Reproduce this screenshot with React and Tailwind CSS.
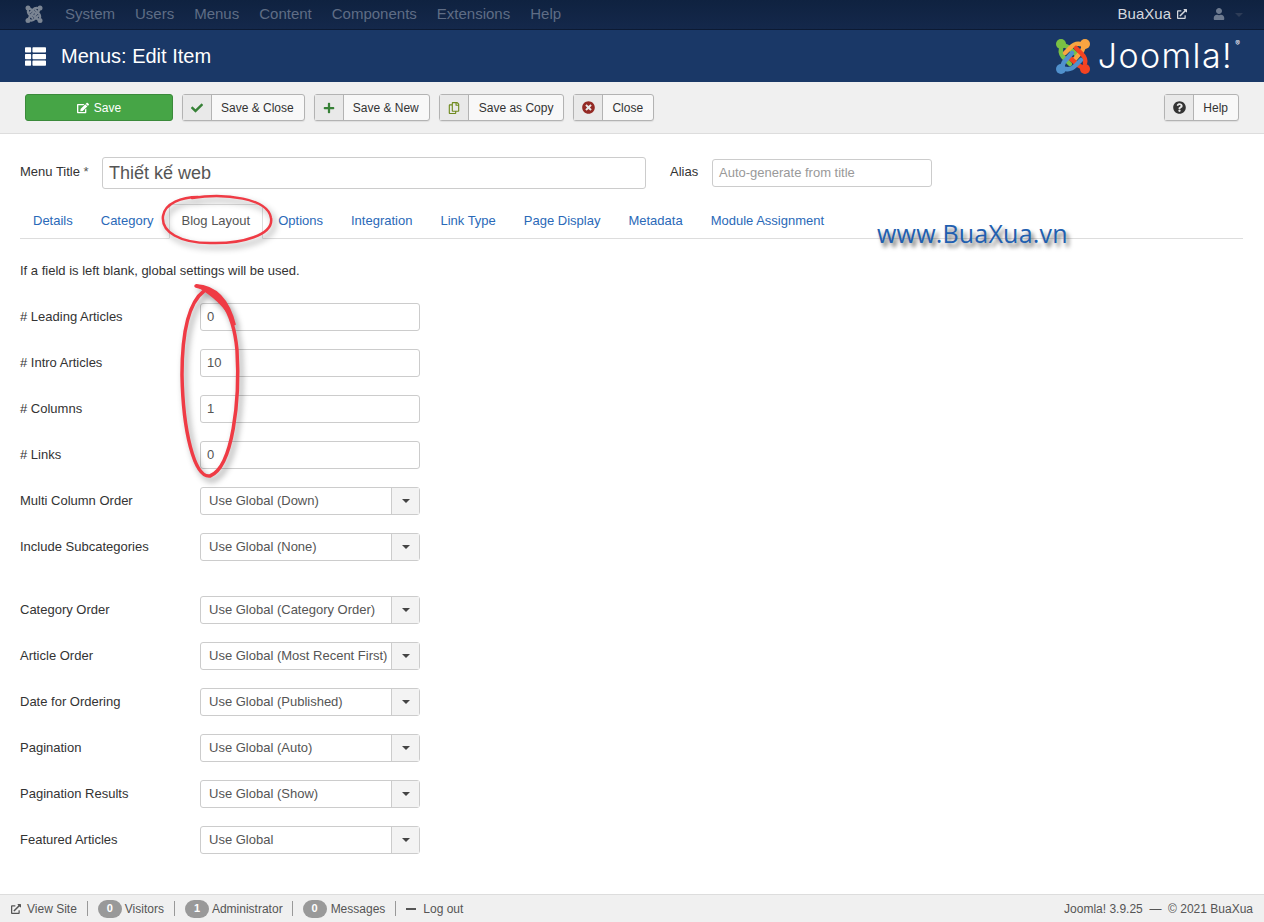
import React from "react";
import {
  FaCheck,
  FaPlus,
  FaRegCopy,
  FaTimesCircle,
  FaQuestionCircle,
  FaUser,
  FaExternalLinkAlt,
  FaEdit,
  FaThList,
} from "react-icons/fa";

const topMenu = ["System", "Users", "Menus", "Content", "Components", "Extensions", "Help"];
const tabs = ["Details", "Category", "Blog Layout", "Options", "Integration", "Link Type", "Page Display", "Metadata", "Module Assignment"];
const numberFields = [
  ["# Leading Articles", "0"],
  ["# Intro Articles", "10"],
  ["# Columns", "1"],
  ["# Links", "0"],
];
const selectsOne = [
  ["Multi Column Order", "Use Global (Down)"],
  ["Include Subcategories", "Use Global (None)"],
];
const selectsTwo = [
  ["Category Order", "Use Global (Category Order)"],
  ["Article Order", "Use Global (Most Recent First)"],
  ["Date for Ordering", "Use Global (Published)"],
  ["Pagination", "Use Global (Auto)"],
  ["Pagination Results", "Use Global (Show)"],
  ["Featured Articles", "Use Global"],
];

function JoomlaMark({ size, colors }) {
  const [green, orange, red, blue] = colors;
  return (
    <svg width={size} height={size} viewBox="0 0 36 36" fill="none" strokeLinecap="round" strokeLinejoin="round">
      <path d="M6 11 C5 15 7 18 10 21 L15 26" stroke={green} strokeWidth="4.5" />
      <path d="M6 6 L13 9 L22 17" stroke={green} strokeWidth="4.5" />
      <circle cx="6" cy="6" r="5" fill={green} />
      <path d="M25 6 C21 5 18 7 15 10 L10 15" stroke={orange} strokeWidth="4.5" />
      <path d="M30 6 L27 13 L19 22" stroke={orange} strokeWidth="4.5" />
      <circle cx="30" cy="6" r="5" fill={orange} />
      <path d="M30 25 C31 21 29 18 26 15 L21 10" stroke={red} strokeWidth="4.5" />
      <path d="M30 31 L23 27 L14 19" stroke={red} strokeWidth="4.5" />
      <circle cx="30" cy="31" r="5" fill={red} />
      <path d="M11 31 C15 32 18 30 21 27 L26 22" stroke={blue} strokeWidth="4.5" />
      <path d="M6 31 L9 24 L17 15" stroke={blue} strokeWidth="4.5" />
      <circle cx="6" cy="31" r="5" fill={blue} />
    </svg>
  );
}

function ToolButton({ icon, label, pad = "pl-[9px] pr-[10px]" }) {
  return (
    <button className="flex h-[27px] items-stretch rounded-[3px] border border-[#b3b3b3] bg-[#f8f8f8] text-xs text-[#333] shadow-[0_1px_1px_rgba(0,0,0,0.08)]">
      <span className="flex w-[29px] items-center justify-center border-r border-[#b3b3b3] bg-[#e9e9e9]">{icon}</span>
      <span className={"flex items-center " + pad}>{label}</span>
    </button>
  );
}

function FieldRow({ label, children }) {
  return (
    <div className="flex h-7 items-center">
      <label className="w-[180px] text-[13px] text-[#333]">{label}</label>
      {children}
    </div>
  );
}

function SelectBox({ value }) {
  return (
    <div className="flex h-7 w-[220px] items-stretch rounded-[3px] border border-[#ccc] bg-white text-[13px] text-[#555]">
      <span className="flex min-w-0 flex-1 items-center whitespace-nowrap pl-2">{value}</span>
      <span className="flex w-7 items-center justify-center border-l border-[#ccc] bg-[#f3f3f3]">
        <span className="h-0 w-0 border-x-4 border-t-4 border-x-transparent border-t-[#444]" />
      </span>
    </div>
  );
}

function Badge({ n }) {
  return (
    <span className="flex h-[18px] w-6 items-center justify-center rounded-full bg-[#999] text-[11px] font-bold text-white">{n}</span>
  );
}

function Sep() {
  return <span className="mx-[10px] h-[15px] w-px bg-[#999]" />;
}

export default function App() {
  return (
    <div className="relative flex h-screen flex-col overflow-hidden bg-white font-['Liberation_Sans',Arial,sans-serif]">
      {/* top bar */}
      <div className="flex h-[30px] shrink-0 items-center border-b border-[#0c1a33] bg-gradient-to-b from-[#0f2240] to-[#14284b] pb-px pl-6 pr-[21px]">
        <span className="mr-[22px] flex w-[19px] justify-center">
          <JoomlaMark size={18} colors={["#7b8593", "#7b8593", "#7b8593", "#7b8593"]} />
        </span>
        <nav className="flex gap-5 text-[15px] text-[#5f6d85]">
          {topMenu.map((m) => (
            <a key={m}>{m}</a>
          ))}
        </nav>
        <div className="ml-auto flex items-center text-[15px] text-[#d5d8de]">
          <span>BuaXua</span>
          <FaExternalLinkAlt className="ml-[6px] text-[10px]" />
          <FaUser className="ml-[26px] text-[12px] text-[#6d7a8f]" />
          <span className="ml-[10px] mt-[2px] h-0 w-0 border-x-4 border-t-4 border-x-transparent border-t-[#2d3c57]" />
        </div>
      </div>

      {/* title header */}
      <div className="flex h-[52px] shrink-0 items-center bg-[#1a3867] pl-[25px] pr-[31px]">
        <FaThList className="text-[21px] text-white" />
        <h1 className="ml-[15px] text-xl text-white">Menus: Edit Item</h1>
        <div className="ml-auto flex items-center gap-[7px]">
          <JoomlaMark size={36} colors={["#7ac143", "#f9a541", "#f44321", "#5091cd"]} />
          <span className="relative font-['Inter',sans-serif] text-[34px] font-light leading-none tracking-[1.4px] text-white">
            Joomla!
            <span className="absolute -right-[7px] top-[1px] text-[7px] font-normal tracking-normal">®</span>
          </span>
        </div>
      </div>

      {/* toolbar */}
      <div className="flex h-[52px] shrink-0 items-center gap-[9px] border-b border-[#ddd] bg-[#f0f0f0] px-[25px]">
        <button className="flex h-[27px] w-[148px] items-center justify-center gap-[5px] rounded-[3px] border border-[#3b8a3b] bg-[#46a546] text-xs text-white">
          <FaEdit className="text-[12px]" />
          Save
        </button>
        <ToolButton icon={<FaCheck className="text-[12px] text-[#378137]" />} label="Save & Close" />
        <ToolButton icon={<FaPlus className="text-[12px] text-[#378137]" />} label="Save & New" />
        <ToolButton icon={<FaRegCopy className="text-[12px] text-[#6f8a1e]" />} label="Save as Copy" pad="px-[10px]" />
        <ToolButton icon={<FaTimesCircle className="text-[13px] text-[#942a25]" />} label="Close" />
        <div className="ml-auto">
          <ToolButton icon={<FaQuestionCircle className="text-[13px] text-[#333]" />} label="Help" />
        </div>
      </div>

      {/* content */}
      <div className="min-h-0 flex-1 px-5 pt-[23px]">
        <div className="flex items-center">
          <label className="w-[82px] pb-[2px] text-[13px] text-[#333]">
            Menu Title <span className="text-[#555]">*</span>
          </label>
          <div className="flex h-[32px] w-[544px] items-center rounded-[3px] border border-[#ccc] px-[6px] text-lg text-[#555]">Thiết kế web</div>
          <label className="ml-6 w-[42px] pb-[2px] text-[13px] text-[#333]">Alias</label>
          <div className="flex h-7 w-[220px] items-center rounded-[3px] border border-[#ccc] px-[6px] text-[13px] text-[#999]">Auto-generate from title</div>
        </div>

        <div className="mt-[15px] flex h-[35px] w-[1223px] border-b border-[#ddd]">
          {tabs.map((t) =>
            t === "Blog Layout" ? (
              <a key={t} className="mr-[2px] -mb-px flex items-center rounded-t-[4px] border border-[#ddd] border-b-white bg-white px-3 pb-[2px] text-[13px] text-[#555]">
                {t}
              </a>
            ) : (
              <a key={t} className="mr-[2px] flex items-center border border-transparent px-3 text-[13px] text-[#2a69b8]">
                {t}
              </a>
            )
          )}
        </div>

        <p className="mt-[23px] text-[13px] leading-[18px] text-[#333]">If a field is left blank, global settings will be used.</p>

        <div className="mt-[23px] flex flex-col gap-[18px]">
          {numberFields.map(([label, val]) => (
            <FieldRow key={label} label={label}>
              <div className="flex h-7 w-[220px] items-center rounded-[3px] border border-[#ccc] bg-white px-[6px] text-[13px] text-[#555]">{val}</div>
            </FieldRow>
          ))}
          {selectsOne.map(([label, val]) => (
            <FieldRow key={label} label={label}>
              <SelectBox value={val} />
            </FieldRow>
          ))}
        </div>

        <div className="mt-[35px] flex flex-col gap-[18px]">
          {selectsTwo.map(([label, val]) => (
            <FieldRow key={label} label={label}>
              <SelectBox value={val} />
            </FieldRow>
          ))}
        </div>
      </div>

      {/* status bar */}
      <div className="flex h-7 shrink-0 items-center border-t border-[#ddd] bg-[#f0f0f0] pl-[11px] pr-[11px] text-xs text-[#555]">
        <FaExternalLinkAlt className="mr-[6px] text-[10px]" />
        <span>View Site</span>
        <Sep />
        <Badge n="0" />
        <span className="ml-[3px]">Visitors</span>
        <Sep />
        <Badge n="1" />
        <span className="ml-[3px] -mr-px">Administrator</span>
        <Sep />
        <Badge n="0" />
        <span className="ml-1">Messages</span>
        <Sep />
        <span className="mr-[7px] h-[2px] w-[10px] bg-[#555]" />
        <span>Log out</span>
        <span className="ml-auto">Joomla! 3.9.25 &nbsp;—&nbsp; © 2021 BuaXua</span>
      </div>

      {/* red annotations and watermark drawn on top of the screenshot */}
      <svg className="pointer-events-none absolute left-[150px] top-[185px]" width="140" height="310" viewBox="0 0 140 310" fill="none">
        <g className="drop-shadow-[3px_4px_3px_rgba(0,0,0,0.4)]">
          <path d="M42 13 C75 8 118 13 121 33 C124 50 92 59 60 58 C30 58 11 47 13 31 C15 18 32 12 48 12" stroke="#ef3b45" strokeWidth="2.5" strokeLinecap="round" />
          <path d="M46 101 C66 104 83 122 87 165 C90 215 83 282 60 291 C44 293 33 245 32 190 C32 148 38 118 54 106" stroke="#ef3b45" strokeWidth="3.5" strokeLinecap="round" />
          <path d="M46 100 C64 101 78 112 85 140 C76 120 62 110 46 100 Z" fill="#ef3b45" stroke="#ef3b45" strokeWidth="2" />
        </g>
      </svg>
      <span className="absolute left-[877px] top-[217px] font-['Open_Sans',sans-serif] text-[25px] leading-8 tracking-[0.2px] text-[#1f5fb0] [text-shadow:3px_4px_4px_rgba(0,0,0,0.6)]">
        www.BuaXua.vn
      </span>
    </div>
  );
}
